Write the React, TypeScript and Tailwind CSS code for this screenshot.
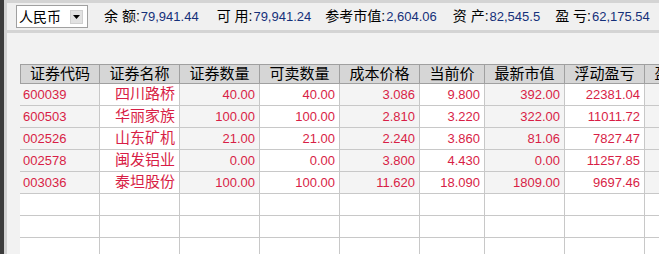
import { Fragment } from 'react';

type Holding = {
  code: string;
  name: string;
  qty: string;
  sellable: string;
  cost: string;
  price: string;
  value: string;
  pnl: string;
};

const holdings: Holding[] = [
  { code: '600039', name: '四川路桥', qty: '40.00', sellable: '40.00', cost: '3.086', price: '9.800', value: '392.00', pnl: '22381.04' },
  { code: '600503', name: '华丽家族', qty: '100.00', sellable: '100.00', cost: '2.810', price: '3.220', value: '322.00', pnl: '11011.72' },
  { code: '002526', name: '山东矿机', qty: '21.00', sellable: '21.00', cost: '2.240', price: '3.860', value: '81.06', pnl: '7827.47' },
  { code: '002578', name: '闽发铝业', qty: '0.00', sellable: '0.00', cost: '3.800', price: '4.430', value: '0.00', pnl: '11257.85' },
  { code: '003036', name: '泰坦股份', qty: '100.00', sellable: '100.00', cost: '11.620', price: '18.090', value: '1809.00', pnl: '9697.46' },
];

const headers = ['证券代码', '证券名称', '证券数量', '可卖数量', '成本价格', '当前价', '最新市值', '浮动盈亏', '盈亏比例'];

const summary = [
  { label: '余 额:', value: '79,941.44', gap: 'ml-[16px]' },
  { label: '可 用:', value: '79,941.24', gap: 'ml-[18px]' },
  { label: '参考市值:', value: '2,604.06', gap: 'ml-[14px]' },
  { label: '资 产:', value: '82,545.5', gap: 'ml-[16px]' },
  { label: '盈 亏:', value: '62,175.54', gap: 'ml-[15px]' },
];

const grid = 'grid grid-cols-[80px_80px_80px_80px_80px_65px_80px_80px_80px]';

function Cell({ text, col, filled }: { text: string; col: number; filled: boolean }) {
  const shade = filled && col % 2 === 0 ? 'bg-[#f4f4f4]' : 'bg-white';
  const align = col === 0 ? 'justify-start pl-[3px]' : 'justify-end pr-[4px]';
  const size = col === 1 ? 'text-[15px]' : 'text-[13px]';
  return (
    <div className={`h-[22px] flex items-center border-r border-b border-[#c8c8c8] overflow-hidden whitespace-nowrap text-[#d81e46] ${shade} ${align} ${size}`}>
      {text}
    </div>
  );
}

export default function App() {
  const blanks = 3;

  return (
    <div className="w-[659px] h-[254px] flex overflow-hidden bg-[#f2f2f2] font-['Liberation_Sans','Noto_Sans_CJK_SC',sans-serif] text-black">
      <div className="w-[4px] shrink-0 bg-[#3c3c3c]" />
      <div className="w-[3px] shrink-0 bg-[#d2d2d2]" />

      <div className="flex-1 flex flex-col min-w-0">
        <div className="h-[3px] shrink-0 bg-[#d4d4d4]" />
        <div className="h-[27px] shrink-0 flex items-center bg-[#f0f0f0] pl-[9px]">
          <div className="w-[72px] h-[23px] flex items-center justify-between bg-white border border-[#a0a0a0] pl-[2px] pr-[4px]">
            <span className="text-[14px] leading-none">人民币</span>
            <div className="w-[13px] h-[14px] flex items-center justify-center bg-[#e2e2e2] border border-[#d0d0d0]">
              <svg width="7" height="4" viewBox="0 0 7 4">
                <path d="M0 0h7L3.5 4z" fill="#000" />
              </svg>
            </div>
          </div>
          {summary.map((item) => (
            <div key={item.label} className={`flex items-baseline ${item.gap}`}>
              <span className="text-[14px]">{item.label}</span>
              <span className="text-[13px] text-[#15307a] ml-[1px]">{item.value}</span>
            </div>
          ))}
        </div>
        <div className="h-[3px] shrink-0 bg-[#d4d4d4]" />

        <div className="shrink-0 pl-[13px] pt-[31px]">
          <div className={`${grid} w-[725px]`}>
            {headers.map((h) => (
              <div
                key={h}
                className="h-[20px] flex items-center justify-center bg-[#d6d6d6] border-t border-r border-b border-[#a0a0a0] first:border-l text-[15px] whitespace-nowrap overflow-hidden"
              >
                {h}
              </div>
            ))}
            {holdings.map((row) => {
              const cells = [row.code, row.name, row.qty, row.sellable, row.cost, row.price, row.value, row.pnl, ''];
              return (
                <Fragment key={row.code}>
                  {cells.map((c, i) => (
                    <Cell key={i} text={c} col={i} filled />
                  ))}
                </Fragment>
              );
            })}
            {Array.from({ length: blanks }).map((_, r) => (
              <Fragment key={`blank-${r}`}>
                {headers.map((_, i) => (
                  <Cell key={i} text="" col={i} filled={false} />
                ))}
              </Fragment>
            ))}
          </div>
        </div>
      </div>
    </div>
  );
}
